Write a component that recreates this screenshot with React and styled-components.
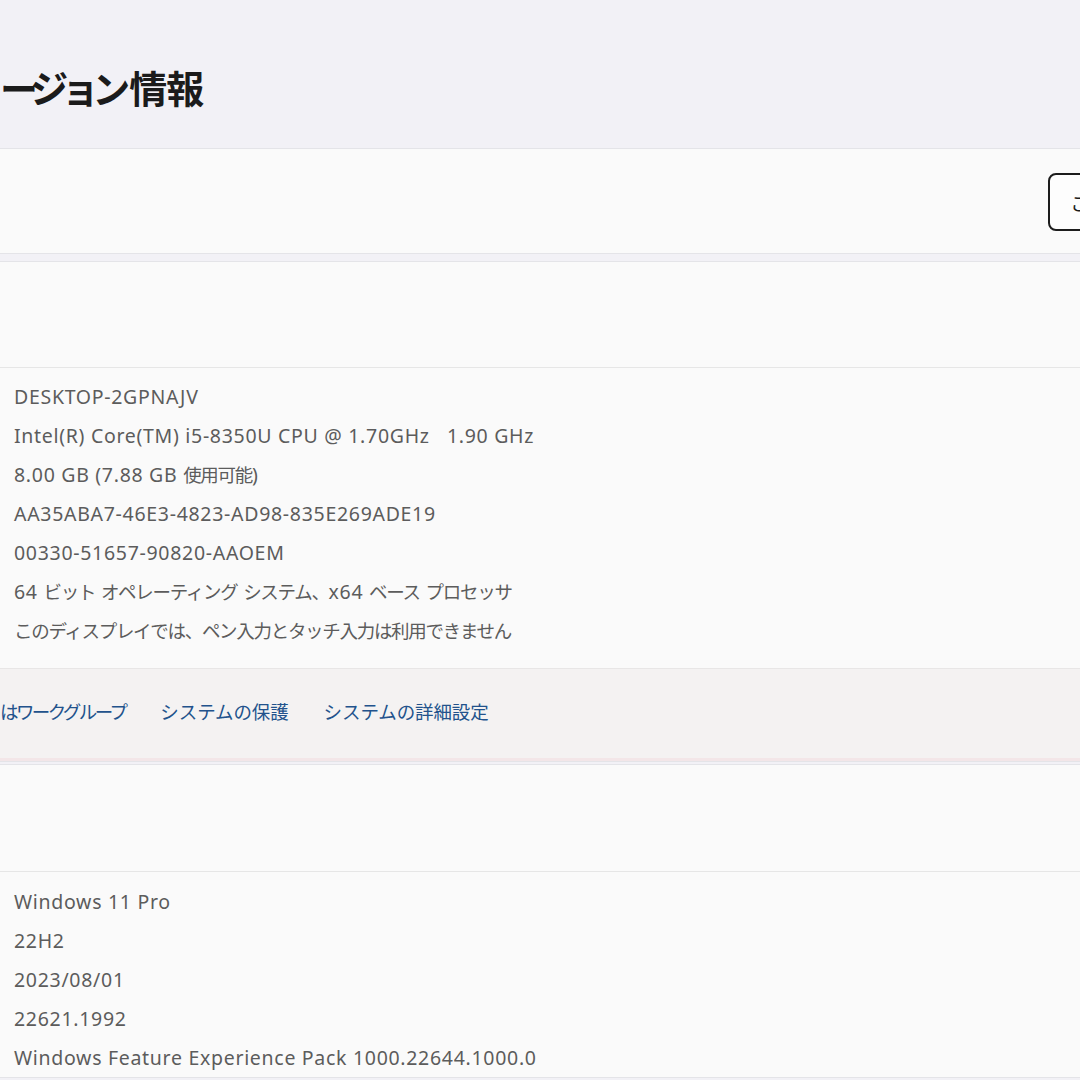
import React from "react";
import styled, { createGlobalStyle } from "styled-components";

const Global = createGlobalStyle`
  html, body { margin: 0; padding: 0; }
  body {
    background: #f2f1f6;
    overflow: hidden;
    font-family: "Noto Sans", "Noto Sans CJK JP", sans-serif;
  }
`;

const Page = styled.div`
  width: 1080px;
  height: 1080px;
  overflow: hidden;
  display: flex;
  flex-direction: column;
`;

const Header = styled.header`
  height: 148px;
  display: flex;
  align-items: center;
  padding-top: 24px;
  box-sizing: border-box;
`;

const Title = styled.h1`
  margin: 0;
  font-family: "Noto Sans CJK JP", sans-serif;
  font-weight: 600;
  font-size: 38px;
  color: #1b1b1b;
  white-space: nowrap;
`;

const TitleKana = styled.span`
  letter-spacing: -7px;
  margin-right: 6px;
`;

const TitleKanji = styled.span`
  letter-spacing: -1px;
`;

const Card = styled.section`
  background: #fafafa;
  border-top: 1px solid #e4e4e8;
  border-bottom: 1px solid #e4e4e8;
  margin-bottom: ${(p) => p.$gap || 0}px;
`;

const NameRow = styled.div`
  height: 104px;
  display: flex;
  align-items: center;
  justify-content: flex-end;
  padding-top: 2px;
  box-sizing: border-box;
`;

const OutlineButton = styled.button`
  flex: none;
  height: 58px;
  margin-right: -197px;
  padding: 0 20px;
  border: 2px solid #1c1c1c;
  border-radius: 8px;
  background: #fdfdfd;
  font-family: "Noto Sans CJK JP", sans-serif;
  font-size: 19px;
  color: #1b1b1b;
  white-space: nowrap;
`;

const SectionHead = styled.div`
  height: ${(p) => p.$h}px;
  border-bottom: 1px solid #e6e6e6;
`;

const List = styled.div`
  display: flex;
  flex-direction: column;
  padding: ${(p) => p.$pad};
`;

const Value = styled.div`
  height: 39px;
  display: flex;
  align-items: center;
  padding-left: 14px;
  font-family: "Noto Sans", "Noto Sans CJK JP", sans-serif;
  font-size: 19.5px;
  letter-spacing: 0.7px;
  color: #5c5c5c;
`;

const ValueText = styled.span`
  white-space: pre;
`;

const Cjk = styled.span`
  font-family: "Noto Sans CJK JP", sans-serif;
  font-size: 18.5px;
  letter-spacing: -1.3px;
`;

const LinksRow = styled.div`
  height: 93px;
  background: #f4f2f2;
  border-top: 1px solid #e8e6e6;
  border-bottom: 3px solid #f3e6e8;
  display: flex;
  align-items: center;
  gap: 35px;
  padding-bottom: 5px;
  box-sizing: border-box;
`;

const Link = styled.a`
  font-family: "Noto Sans CJK JP", sans-serif;
  font-size: 18.5px;
  letter-spacing: ${(p) => p.$ls ?? -0.1}px;
  color: #22528c;
  text-decoration: none;
  white-space: nowrap;
`;

const specs = [
  "DESKTOP-2GPNAJV",
  "Intel(R) Core(TM) i5-8350U CPU @ 1.70GHz   1.90 GHz",
  "8.00 GB (7.88 GB 使用可能)",
  "AA35ABA7-46E3-4823-AD98-835E269ADE19",
  "00330-51657-90820-AAOEM",
  "64 ビット オペレーティング システム、x64 ベース プロセッサ",
  "このディスプレイでは、ペン入力とタッチ入力は利用できません",
];

const win = [
  "Windows 11 Pro",
  "22H2",
  "2023/08/01",
  "22621.1992",
  "Windows Feature Experience Pack 1000.22644.1000.0",
];

const CJK_RE = /([\u3001-\u30ff\u4e00-\u9fff\uff00-\uffef]+)/;

function Mixed({ text }) {
  return (
    <ValueText>
      {text
        .split(CJK_RE)
        .filter(Boolean)
        .map((part, i) =>
          CJK_RE.test(part) ? (
            <Cjk key={i}>{part}</Cjk>
          ) : (
            <React.Fragment key={i}>{part}</React.Fragment>
          )
        )}
    </ValueText>
  );
}

export default function App() {
  return (
    <Page>
      <Global />
      <Header>
        <Title>
          <TitleKana>ージョン</TitleKana>
          <TitleKanji>情報</TitleKanji>
        </Title>
      </Header>
      <Card $gap={7}>
        <NameRow>
          <OutlineButton>この PC の名前を変更</OutlineButton>
        </NameRow>
      </Card>
      <Card $gap={2}>
        <SectionHead $h={105} />
        <List $pad="9px 0 18px">
          {specs.map((s) => (
            <Value key={s}>
              <Mixed text={s} />
            </Value>
          ))}
        </List>
        <LinksRow>
          <Link $ls={-2.6}>はワークグループ</Link>
          <Link>システムの保護</Link>
          <Link>システムの詳細設定</Link>
        </LinksRow>
      </Card>
      <Card>
        <SectionHead $h={106} />
        <List $pad="10px 0 0">
          {win.map((s) => (
            <Value key={s}>
              <Mixed text={s} />
            </Value>
          ))}
        </List>
      </Card>
    </Page>
  );
}
